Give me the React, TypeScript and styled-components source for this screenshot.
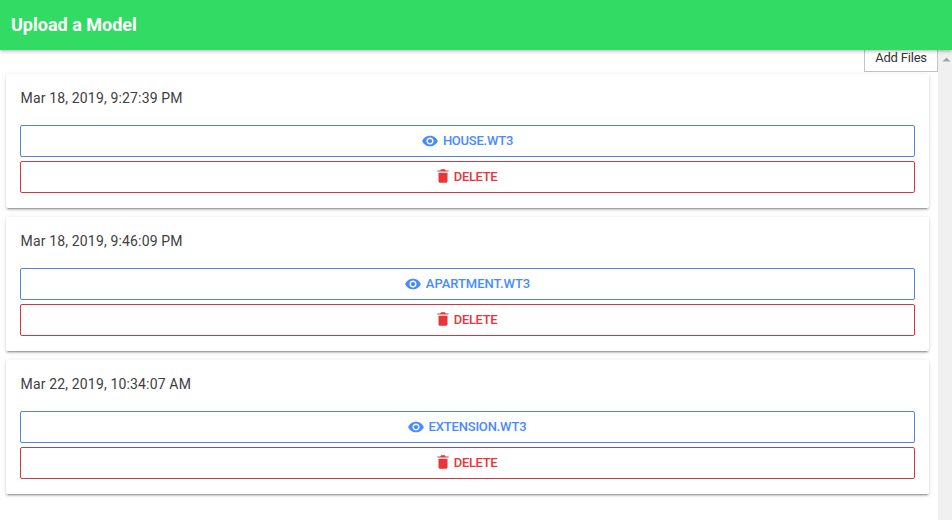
import React from "react";
import styled, { createGlobalStyle } from "styled-components";
import { IoMdEye, IoMdTrash } from "react-icons/io";

const GlobalStyle = createGlobalStyle`
  * { box-sizing: border-box; }
  body { margin: 0; overflow: hidden; background: #fff; font-family: Roboto, "Liberation Sans", sans-serif; }
`;

const Page = styled.div`
  display: flex;
  flex-direction: column;
  width: 952px;
  height: 520px;
  overflow: hidden;
`;

const Header = styled.header`
  position: relative;
  z-index: 1;
  flex: none;
  display: flex;
  align-items: center;
  height: 50px;
  padding-left: 11px;
  background: #32db64;
  box-shadow: 0 1px 4px rgba(0, 0, 0, 0.32);
`;

const Title = styled.h1`
  margin: 0;
  color: #fff;
  font-size: 18px;
  line-height: 24px;
  font-weight: 700;
`;

const Body = styled.div`
  display: flex;
  flex: 1;
  min-height: 0;
`;

const Content = styled.main`
  flex: 1;
  overflow: hidden;
`;

const Toolbar = styled.div`
  display: flex;
  justify-content: flex-end;
  height: 24px;
`;

const AddButton = styled.button`
  width: 74px;
  height: 30px;
  margin-top: -8px;
  padding: 2px 0 0;
  border: 1px solid #c4c4c4;
  background: #fff;
  color: #333;
  font: 400 13px/26px Roboto, sans-serif;
  letter-spacing: -0.2px;
`;

const List = styled.div`
  display: flex;
  flex-direction: column;
  gap: 9px;
  padding: 0 9px 0 6px;
`;

const Card = styled.section`
  display: flex;
  flex-direction: column;
  height: 134px;
  padding: 15px 14px 0;
  border-radius: 2px;
  background: #fff;
  box-shadow: 0 3px 1px -2px rgba(0, 0, 0, 0.2), 0 2px 2px 0 rgba(0, 0, 0, 0.14),
    0 1px 5px 0 rgba(0, 0, 0, 0.12);
`;

const DateText = styled.time`
  height: 36px;
  padding-left: 0.5px;
  color: #404040;
  font-size: 14px;
  line-height: 19px;
  letter-spacing: 0.16px;
`;

const ActionButton = styled.button<{ $color: string; $line: string; $trail?: number }>`
  display: flex;
  align-items: center;
  justify-content: center;
  flex: none;
  height: 32px;
  margin-bottom: 4px;
  padding: 0 ${(p) => p.$trail ?? 0}px 0 0;
  border: 1px solid ${(p) => p.$line};
  border-radius: 2px;
  background: transparent;
  color: ${(p) => p.$color};
  font: 500 13px/16px Roboto, sans-serif;

  svg {
    flex: none;
    width: 18px;
    height: 18px;
  }
`;

const EyeIcon = styled(IoMdEye)`
  margin-bottom: 1px;
`;

const TrashIcon = styled(IoMdTrash)`
  margin-bottom: 2px;
`;

const Label = styled.span<{ $gap: number; $spacing: number }>`
  margin-left: ${(p) => p.$gap}px;
  letter-spacing: ${(p) => p.$spacing}px;
`;

const Scrollbar = styled.div`
  flex: none;
  width: 14px;
  padding: 7px 0 0 4px;
  background: #f0f0f0;
`;

const ScrollArrow = styled.svg`
  display: block;
  width: 9px;
  height: 5px;
  fill: #a3a3a3;
`;

const models = [
  { date: "Mar 18, 2019, 9:27:39 PM", name: "HOUSE.WT3", spacing: -0.24, trail: 1 },
  { date: "Mar 18, 2019, 9:46:09 PM", name: "APARTMENT.WT3", spacing: -0.04, trail: 1 },
  { date: "Mar 22, 2019, 10:34:07 AM", name: "EXTENSION.WT3", spacing: -0.19, trail: 2 },
];

export default function App() {
  return (
    <Page>
      <GlobalStyle />
      <Header>
        <Title>Upload a Model</Title>
      </Header>
      <Body>
        <Content>
          <Toolbar>
            <AddButton>Add Files</AddButton>
          </Toolbar>
          <List>
            {models.map((m) => (
              <Card key={m.name}>
                <DateText>{m.date}</DateText>
                <ActionButton $color="#488aff" $line="#4d86dc" $trail={m.trail}>
                  <EyeIcon />
                  <Label $gap={4} $spacing={m.spacing}>{m.name}</Label>
                </ActionButton>
                <ActionButton $color="#e8353a" $line="#cc3b43" $trail={4}>
                  <TrashIcon />
                  <Label $gap={2} $spacing={-0.36}>DELETE</Label>
                </ActionButton>
              </Card>
            ))}
          </List>
        </Content>
        <Scrollbar>
          <ScrollArrow viewBox="0 0 9 5">
            <path d="M0.5 4.5 4.5 0.5 8.5 4.5z" />
          </ScrollArrow>
        </Scrollbar>
      </Body>
    </Page>
  );
}
